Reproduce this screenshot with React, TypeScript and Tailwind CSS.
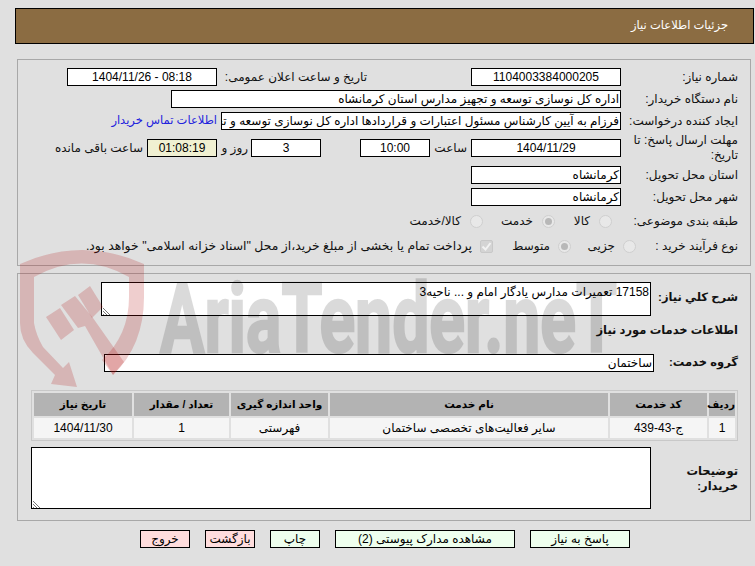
const field = "h-[18px] border border-black bg-white text-[12px] leading-[16px] px-[1px] whitespace-nowrap overflow-hidden";
const center = "h-[18px] border border-black bg-white text-[12px] leading-[16px] text-center whitespace-nowrap overflow-hidden";
const label = "text-[12px] text-[#111] whitespace-nowrap";
const bold = "text-[11.5px] font-bold text-[#111] whitespace-nowrap";

function Radio({ checked }: { checked?: boolean }) {
  return (
    <span className="w-[13px] h-[13px] rounded-full border border-[#cfcfcf] bg-[#e8e8e8] flex items-center justify-center shrink-0">
      {checked && <span className="w-[7px] h-[7px] rounded-full bg-[#b8b8b8]" />}
    </span>
  );
}

function Resize() {
  return (
    <svg className="absolute left-0 bottom-0" width="9" height="9" viewBox="0 0 9 9" fill="none">
      <path d="M1 2 L8 9 M1 5 L5 9 M1 8 L2 9" stroke="#777" strokeWidth="1" />
    </svg>
  );
}

// sits over the page like the site's stamp, so it tints the white fields too
function Watermark() {
  const red = "rgba(175,10,10,0.2)";
  return (
    <svg className="absolute left-0 top-[240px] pointer-events-none" width="755" height="160" viewBox="0 240 755 160">
      <path
        d="M20 264 Q82 236 144 264 L144 297 Q144 345 113 375 L102 360 Q129 335 129 297 L129 277 Q82 250 34 277 L34 323 Q36 335 43 347 L63 368 L69 362 L77 387 L51 384 L55 375 L33 353 Q20 340 20 323 Z"
        fill={red}
      />
      <g fill={red}>
        <path d="M46 317 L60 308 L74 330 L61 340 Z" />
        <path d="M61 305 L75 296 L93 318 L124 362 L113 375 L85 326 L78 328 Z" />
        <path d="M78 295 L90 286 L103 307 L92 318 Z" />
      </g>
      <text
        x="160"
        y="352"
        direction="ltr"
        textAnchor="start"
        fontFamily="Roboto, sans-serif"
        fontWeight="700"
        fontSize="97"
        fill="#000"
        stroke="#000"
        strokeWidth="2.5"
        opacity="0.14"
        textLength="457"
        lengthAdjust="spacingAndGlyphs"
      >
        AriaTender.neT
      </text>
    </svg>
  );
}

export default function App() {
  return (
    <div dir="rtl" className="relative w-[755px] h-[566px] overflow-hidden bg-[#e0e0e0] font-['Liberation_Sans','DejaVu_Sans',sans-serif] text-[12px] text-black">
      <div className="ml-[15px] mr-[1px] mt-[8px] h-[36px] border border-black bg-[#8b6c42] flex items-center pr-[25px] text-[11.5px] text-white">
        جزئیات اطلاعات نیاز
      </div>

      <div className="mt-[15px] ml-[17px] mr-[4px] h-[207px] border border-[#a8a8a8] pt-[6px] pr-[12px]">
        <div className="flex items-center h-[22px]">
          <span className={`${label} w-[117px]`}>شماره نیاز:</span>
          <div className={`${center} w-[150px]`}>1104003384000205</div>
          <span className={`${label} w-[150px] mr-[104px]`}>تاریخ و ساعت اعلان عمومی:</span>
          <div className={`${center} w-[150px]`}>08:18 - 1404/11/26</div>
        </div>
        <div className="flex items-center h-[22px]">
          <span className={`${label} w-[117px]`}>نام دستگاه خریدار:</span>
          <div className={`${field} w-[450px]`}>اداره کل نوسازی  توسعه و تجهیز مدارس استان کرمانشاه</div>
        </div>
        <div className="flex items-center h-[22px]">
          <span className={`${label} w-[117px]`}>ایجاد کننده درخواست:</span>
          <div className={`${field} w-[400px]`}>فرزام به آیین کارشناس مسئول اعتبارات و قراردادها اداره کل نوسازی  توسعه و تجهیز مدارس</div>
          <span className="text-[11.5px] text-[#2222dd] mr-[4px] whitespace-nowrap">اطلاعات تماس خریدار</span>
        </div>
        <div className="flex items-center h-[32px]">
          <span className="text-[12px] text-[#111] w-[117px] leading-[15px]">مهلت ارسال پاسخ: تا تاریخ:</span>
          <div className={`${center} w-[150px]`}>1404/11/29</div>
          <span className={`${label} w-[41px] pr-[4px]`}>ساعت</span>
          <div className={`${center} w-[70px]`}>10:00</div>
          <div className={`${center} w-[70px] mr-[39px]`}>3</div>
          <span className={`${label} w-[34px] pr-[3px]`}>روز و</span>
          <div className={`${center} w-[70px] !bg-[#f0f0d2]`}>01:08:19</div>
          <span className={`${label} mr-[4px]`}>ساعت باقی مانده</span>
        </div>
        <div className="flex items-center h-[22px]">
          <span className={`${label} w-[117px]`}>استان محل تحویل:</span>
          <div className={`${field} w-[150px]`}>کرمانشاه</div>
        </div>
        <div className="flex items-center h-[22px]">
          <span className={`${label} w-[117px]`}>شهر محل تحویل:</span>
          <div className={`${field} w-[150px]`}>کرمانشاه</div>
        </div>
        <div className="flex items-center h-[26px]">
          <span className={`${label} w-[126px]`}>طبقه بندی موضوعی:</span>
          <Radio />
          <span className={`${label} w-[35px] mr-[9px]`}>کالا</span>
          <Radio checked />
          <span className={`${label} w-[50px] mr-[9px]`}>خدمت</span>
          <Radio />
          <span className={`${label} mr-[9px]`}>کالا/خدمت</span>
        </div>
        <div className="flex items-center h-[24px]">
          <span className={`${label} w-[102px]`}>نوع فرآیند خرید :</span>
          <Radio />
          <span className={`${label} w-[44px] mr-[8px]`}>جزیی</span>
          <Radio checked />
          <span className={`${label} w-[57px] mr-[8px]`}>متوسط</span>
          <span className="w-[13px] h-[13px] rounded-[2px] bg-[#d4d4d4] border border-[#c8c8c8] flex items-center justify-center shrink-0">
            <svg width="11" height="11" viewBox="0 0 11 11" fill="none">
              <path d="M1.5 5.5 L4.5 8.5 L9.5 2" stroke="#f2f2f2" strokeWidth="2" />
            </svg>
          </span>
          <span className="text-[12.4px] text-[#111] whitespace-nowrap mr-[8px]">پرداخت تمام یا بخشی از مبلغ خرید،از محل "اسناد خزانه اسلامی" خواهد بود.</span>
        </div>
      </div>

      <div className="mt-[7px] ml-[17px] mr-[4px] h-[248px] border border-[#a8a8a8] pr-[12px]">
        <div className="flex mt-[8px]">
          <span className={`${bold} w-[87px] pt-[7px]`}>شرح کلي نیاز:</span>
          <div className="w-[550px] h-[34px] border border-black bg-white px-[1px] text-[12px] leading-[18px] relative">
            17158 تعمیرات مدارس یادگار امام و ... ناحیه3
            <Resize />
          </div>
        </div>
        <div className={`${bold} mt-[6px] h-[18px]`}>اطلاعات خدمات مورد نیاز</div>
        <div className="flex items-center mt-[14px]">
          <span className={`${bold} w-[84px]`}>گروه خدمت:</span>
          <div className={`${field} w-[550px]`}>ساختمان</div>
        </div>

        <div className="mt-[18px] w-[707px] border border-[#c8c8c8] p-[2px]">
          <div className="grid grid-cols-[26px_97px_278px_97px_95px_98px] gap-[2px] text-center">
            {["ردیف", "کد خدمت", "نام خدمت", "واحد اندازه گیری", "تعداد / مقدار", "تاریخ نیاز"].map((h) => (
              <div key={h} className="h-[23px] bg-[#b3b3b3] font-bold text-[10.5px] leading-[23px] whitespace-nowrap">{h}</div>
            ))}
            {["1", "ج-43-439", "سایر فعالیت‌های تخصصی ساختمان", "فهرستی", "1", "1404/11/30"].map((c, i) => (
              <div key={i} className="h-[20px] bg-[#f5f5f5] text-[12px] leading-[20px] whitespace-nowrap">{c}</div>
            ))}
          </div>
        </div>

        <div className="flex mt-[6px]">
          <span className={`${bold} w-[87px] pt-[17px] leading-[15px]`}>توضیحات<br />خریدار:</span>
          <div className="w-[620px] h-[62px] border border-black bg-white relative">
            <Resize />
          </div>
        </div>
      </div>

      <div className="flex gap-[15px] mt-[9px] mr-[125px] text-[12px]">
        <button className="w-[100px] h-[18px] border border-black bg-[#eeffee] leading-[16px]">پاسخ به نیاز</button>
        <button className="w-[180px] h-[18px] border border-black bg-[#eeffee] leading-[16px]">مشاهده مدارک پیوستی (2)</button>
        <button className="w-[50px] h-[18px] border border-black bg-[#eeffee] leading-[16px]">چاپ</button>
        <button className="w-[50px] h-[18px] border border-black bg-[#ffdddd] leading-[16px]">بازگشت</button>
        <button className="w-[50px] h-[18px] border border-black bg-[#ffdddd] leading-[16px]">خروج</button>
      </div>

      <Watermark />
    </div>
  );
}
